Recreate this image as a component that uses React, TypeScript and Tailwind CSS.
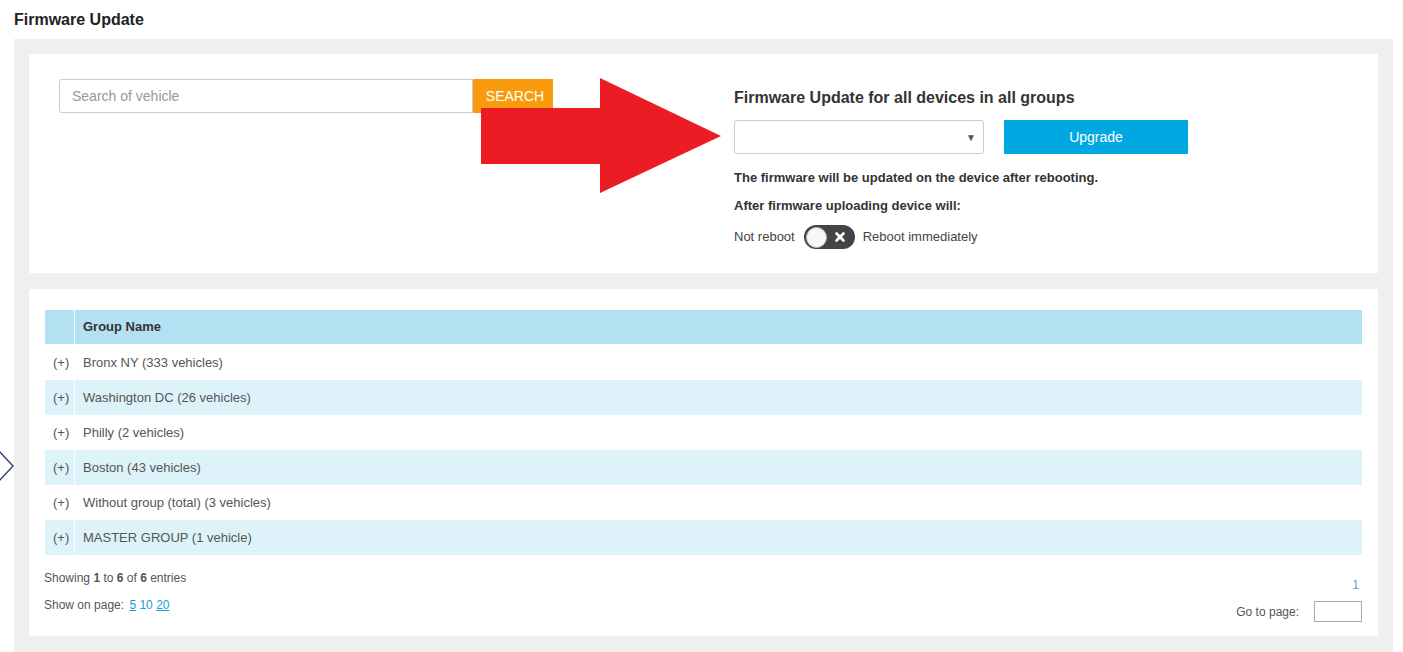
import { useState } from "react";

const groups = [
  "Bronx NY (333 vehicles)",
  "Washington DC (26 vehicles)",
  "Philly (2 vehicles)",
  "Boston (43 vehicles)",
  "Without group (total) (3 vehicles)",
  "MASTER GROUP (1 vehicle)",
];

export default function App() {
  const [query, setQuery] = useState("");
  const [reboot, setReboot] = useState(false);

  return (
    <div className="relative min-h-screen bg-white font-['Liberation_Sans',Arial,sans-serif] text-[#333]">
      {/* Title */}
      <h1 className="px-[14px] pt-[10px] pb-[9px] text-[16px] font-bold leading-[20px] text-[#222]">Firmware Update</h1>

      <div className="mr-[10px] ml-[14px] bg-[#efefef] p-[15px] pb-[16px]">
        {/* Top card */}
        <div className="flex h-[219px] bg-white pt-[25px] pl-[30px]">
          <div className="w-[675px] shrink-0">
            <div className="flex h-[34px] w-[494px]">
              <input
                value={query}
                onChange={(e) => setQuery(e.target.value)}
                placeholder="Search of vehicle"
                className="h-full flex-1 rounded-l-[3px] border border-[#ccc] px-[12px] text-[14px] text-[#555] outline-none placeholder-[#999]"
              />
              <button className="h-full w-[80px] bg-[#f89c0e] pl-[4px] text-[14px] text-white">SEARCH</button>
            </div>
          </div>

          <div className="pt-[9px]">
            <h2 className="text-[16px] font-bold leading-[20px] text-[#333]">Firmware Update for all devices in all groups</h2>
            <div className="mt-[12px] flex gap-[20px]">
              <div className="relative h-[34px] w-[250px] rounded-[3px] border border-[#ccc] bg-white">
                <span className="absolute top-[9px] right-[7px] text-[10px] text-[#555]">▼</span>
              </div>
              <button className="h-[34px] w-[184px] bg-[#00a8e1] text-[14px] text-white">Upgrade</button>
            </div>
            <p className="mt-[15px] text-[13px] font-bold leading-[18px] text-[#333]">
              The firmware will be updated on the device after rebooting.
            </p>
            <p className="mt-[10px] text-[13px] font-bold leading-[18px] text-[#333]">After firmware uploading device will:</p>
            <div className="mt-[10px] flex items-center gap-[9px] text-[13px] text-[#444]">
              <span>Not reboot</span>
              <button
                onClick={() => setReboot(!reboot)}
                className="flex h-[24px] w-[51px] items-center justify-between rounded-full bg-[#444] px-[2px]"
              >
                <span className="h-[21px] w-[21px] rounded-full border border-[#bbb] bg-[#f7f7f7]" />
                <svg width="12" height="12" viewBox="0 0 12 12" className="mr-[7px]">
                  <path d="M2.5 2.5 L9.5 9.5 M9.5 2.5 L2.5 9.5" stroke="white" strokeWidth="2.6" strokeLinecap="round" />
                </svg>
              </button>
              <span className="-ml-[1px]">Reboot immediately</span>
            </div>
          </div>
        </div>

        {/* Table card */}
        <div className="mt-[16px] h-[347px] bg-white px-[16px] pt-[21px]">
          <div className="flex h-[35px] items-stretch border-b border-white bg-[#b3e1f1] text-[13px] font-bold text-[#333]">
            <div className="w-[30px] border-r border-white" />
            <div className="flex items-center pl-[8px]">Group Name</div>
          </div>
          {groups.map((g, i) => (
            <div
              key={g}
              className={`flex h-[35px] items-stretch text-[13px] text-[#555] ${i % 2 === 1 ? "bg-[#def2f9]" : "bg-white"}`}
            >
              <div className="flex w-[30px] items-center border-r border-white pl-[8px]">(+)</div>
              <div className="flex items-center pl-[8px]">{g}</div>
            </div>
          ))}

          <div className="mt-[15px] flex justify-between text-[12px] text-[#555]">
            <div className="-ml-[1px]">
              <p className="leading-[16px]">
                Showing <b>1</b> to <b>6</b> of <b>6</b> entries
              </p>
              <p className="mt-[11px] leading-[16px]">
                Show on page:{" "}
                <a className="ml-[2px] text-[#1a9dd9] underline">5</a>{" "}
                <a className="text-[#1a9dd9]">10</a>{" "}
                <a className="text-[#1a9dd9] underline">20</a>
              </p>
            </div>
            <div className="flex flex-col items-end">
              <span className="mt-[7px] mr-[3px] text-[#4aa8d8] leading-[16px]">1</span>
              <div className="mt-[8px] flex items-center gap-[15px]">
                <span>Go to page:</span>
                <input className="h-[21px] w-[48px] border border-[#aaa] outline-none" />
              </div>
            </div>
          </div>
        </div>
      </div>

      {/* Red arrow overlay */}
      <svg className="absolute top-[78px] left-[481px]" width="241" height="116" viewBox="0 0 241 116">
        <polygon points="0,30 119,30 119,0 240,58 119,115 119,86 0,86" fill="#ec1c24" />
      </svg>

      {/* Left carousel chevron */}
      <svg className="absolute top-[448px] left-0" width="16" height="36" viewBox="0 0 16 36">
        <path d="M-2 2 L13 18 L-2 34" fill="none" stroke="#3b4a7a" strokeWidth="1.5" />
      </svg>
    </div>
  );
}
